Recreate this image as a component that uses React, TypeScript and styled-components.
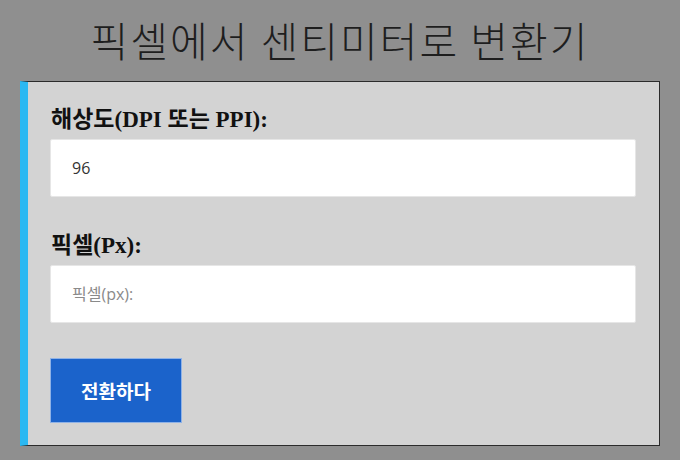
import { useState } from "react";
import styled, { createGlobalStyle } from "styled-components";

const GlobalStyle = createGlobalStyle`
    html, body {
        margin: 0;
        padding: 0;
        background-color: #8f8f8f;
    }
    * {
        box-sizing: border-box;
    }
`;

const StyledPage = styled.main`
    width: 680px;
    height: 460px;
    padding: 0 20px;
    display: flex;
    flex-direction: column;
    overflow: hidden;
`;

const StyledTitle = styled.h1`
    margin: 14px 0 0;
    height: 67px;
    font-family: "Noto Sans CJK KR", sans-serif;
    font-weight: 300;
    font-size: 41px;
    line-height: 50px;
    letter-spacing: 2px;
    text-align: center;
    color: #1e1e1e;
`;

const StyledPanel = styled.section`
    width: 640px;
    display: flex;
    flex-direction: column;
    padding: 24px 22px 22px 22px;
    background-color: #d3d3d3;
    border: 1px solid #2b2b2b;
    border-left: 8px solid #2bb8f2;
`;

const StyledField = styled.div`
    display: flex;
    flex-direction: column;
    gap: 6px;
    margin-bottom: 35px;
`;

const StyledLabel = styled.label`
    font-family: "Liberation Serif", "Noto Sans CJK KR", serif;
    font-weight: bold;
    font-size: 23px;
    line-height: 27px;
    color: #111;
    padding-left: 1px;
`;

const StyledInput = styled.input`
    width: 586px;
    height: 58px;
    padding: 0 21px;
    border: 1px solid #e6e6e6;
    border-radius: 2px;
    background-color: #fff;
    font-family: "Open Sans", "Noto Sans CJK KR", sans-serif;
    font-size: 16px;
    color: #333;
    outline: none;
    &::placeholder {
        color: #8a8a8a;
    }
`;

const StyledButton = styled.button`
    align-self: flex-start;
    width: 132px;
    height: 65px;
    border: 1px solid #8fb2e6;
    background-color: #1b63cb;
    color: #fff;
    font-family: "Noto Sans CJK KR", sans-serif;
    font-weight: bold;
    font-size: 19px;
    cursor: pointer;
`;

export default function App() {
    const [dpi, setDpi] = useState("96");
    const [px, setPx] = useState("");

    return (
        <>
            <GlobalStyle />
            <StyledPage>
                <StyledTitle>픽셀에서 센티미터로 변환기</StyledTitle>
                <StyledPanel>
                    <StyledField>
                        <StyledLabel htmlFor="dpi">해상도(DPI 또는 PPI):</StyledLabel>
                        <StyledInput id="dpi" type="text" value={dpi} onChange={(e) => setDpi(e.target.value)} />
                    </StyledField>
                    <StyledField>
                        <StyledLabel htmlFor="px">픽셀(Px):</StyledLabel>
                        <StyledInput id="px" type="text" placeholder="픽셀(px):" value={px} onChange={(e) => setPx(e.target.value)} />
                    </StyledField>
                    <StyledButton type="button">전환하다</StyledButton>
                </StyledPanel>
            </StyledPage>
        </>
    );
}
